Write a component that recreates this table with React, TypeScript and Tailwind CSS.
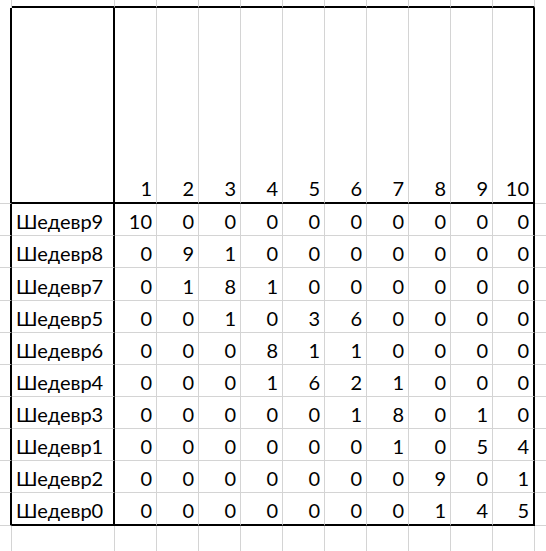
import React from "react";

const rows: [string, number[]][] = [
  ["Шедевр9", [10, 0, 0, 0, 0, 0, 0, 0, 0, 0]],
  ["Шедевр8", [0, 9, 1, 0, 0, 0, 0, 0, 0, 0]],
  ["Шедевр7", [0, 1, 8, 1, 0, 0, 0, 0, 0, 0]],
  ["Шедевр5", [0, 0, 1, 0, 3, 6, 0, 0, 0, 0]],
  ["Шедевр6", [0, 0, 0, 8, 1, 1, 0, 0, 0, 0]],
  ["Шедевр4", [0, 0, 0, 1, 6, 2, 1, 0, 0, 0]],
  ["Шедевр3", [0, 0, 0, 0, 0, 1, 8, 0, 1, 0]],
  ["Шедевр1", [0, 0, 0, 0, 0, 0, 1, 0, 5, 4]],
  ["Шедевр2", [0, 0, 0, 0, 0, 0, 0, 9, 0, 1]],
  ["Шедевр0", [0, 0, 0, 0, 0, 0, 0, 1, 4, 5]],
];

const heights = ["h-[32px]", "h-[32px]", "h-[33px]", "h-[32px]", "h-[32px]", "h-[32px]", "h-[32px]", "h-[32px]", "h-[32px]", "h-[33px]"];
const cols = [1, 2, 3, 4, 5, 6, 7, 8, 9, 10];

// empty sheet row, only vertical gridlines
const Blank = ({ h, top }: { h: string; top?: boolean }) => (
  <div className={`flex ${h}`}>
    <div className="w-[12px] shrink-0 border-r border-[#d4d4d4]" />
    <div className={`w-[103px] shrink-0 border-r border-[#d4d4d4] ${top ? "border-b-2 border-b-black" : ""}`} />
    {cols.map((c) => (
      <div
        key={c}
        className={`w-[42px] shrink-0 border-r border-[#d4d4d4] ${top ? "border-b-2 border-b-black" : ""}`}
      />
    ))}
    <div className="flex-1" />
  </div>
);

export default function App() {
  return (
    <div className="w-[546px] h-[551px] overflow-hidden bg-white text-black text-[20px] leading-none font-['Lato','Noto_Sans',sans-serif]">
      <Blank h="h-[8px]" top />
      {/* header row */}
      <div className="flex h-[196px]">
        <div className="w-[12px] shrink-0 border-r-2 border-r-black border-b border-[#d4d4d4]" />
        <div className="w-[103px] shrink-0 border-r-2 border-r-black border-b-2 border-b-black" />
        {cols.map((c) => (
          <div
            key={c}
            className={`w-[42px] shrink-0 flex items-end justify-end pr-[4px] pb-[4px] border-b-2 border-b-black ${
              c === 10 ? "border-r-2 border-r-black" : "border-r border-r-[#d4d4d4]"
            }`}
          >
            {c}
          </div>
        ))}
        <div className="flex-1 border-b border-[#d4d4d4]" />
      </div>
      {rows.map(([name, vals], i) => {
        const last = i === rows.length - 1;
        const bb = last ? "border-b-2 border-b-black" : "border-b border-b-[#d4d4d4]";
        return (
          <div key={name} className={`flex ${heights[i]}`}>
            <div className="w-[12px] shrink-0 border-r-2 border-r-black border-b border-[#d4d4d4]" />
            <div className={`w-[103px] shrink-0 flex items-end pl-[4px] pb-[4px] border-r-2 border-r-black ${bb}`}>
              {name}
            </div>
            {vals.map((v, j) => (
              <div
                key={j}
                className={`w-[42px] shrink-0 flex items-end justify-end pr-[4px] pb-[4px] ${bb} ${
                  j === 9 ? "border-r-2 border-r-black" : "border-r border-r-[#d4d4d4]"
                }`}
              >
                {v}
              </div>
            ))}
            <div className="flex-1 border-b border-[#d4d4d4]" />
          </div>
        );
      })}
      <Blank h="h-[40px]" />
    </div>
  );
}
